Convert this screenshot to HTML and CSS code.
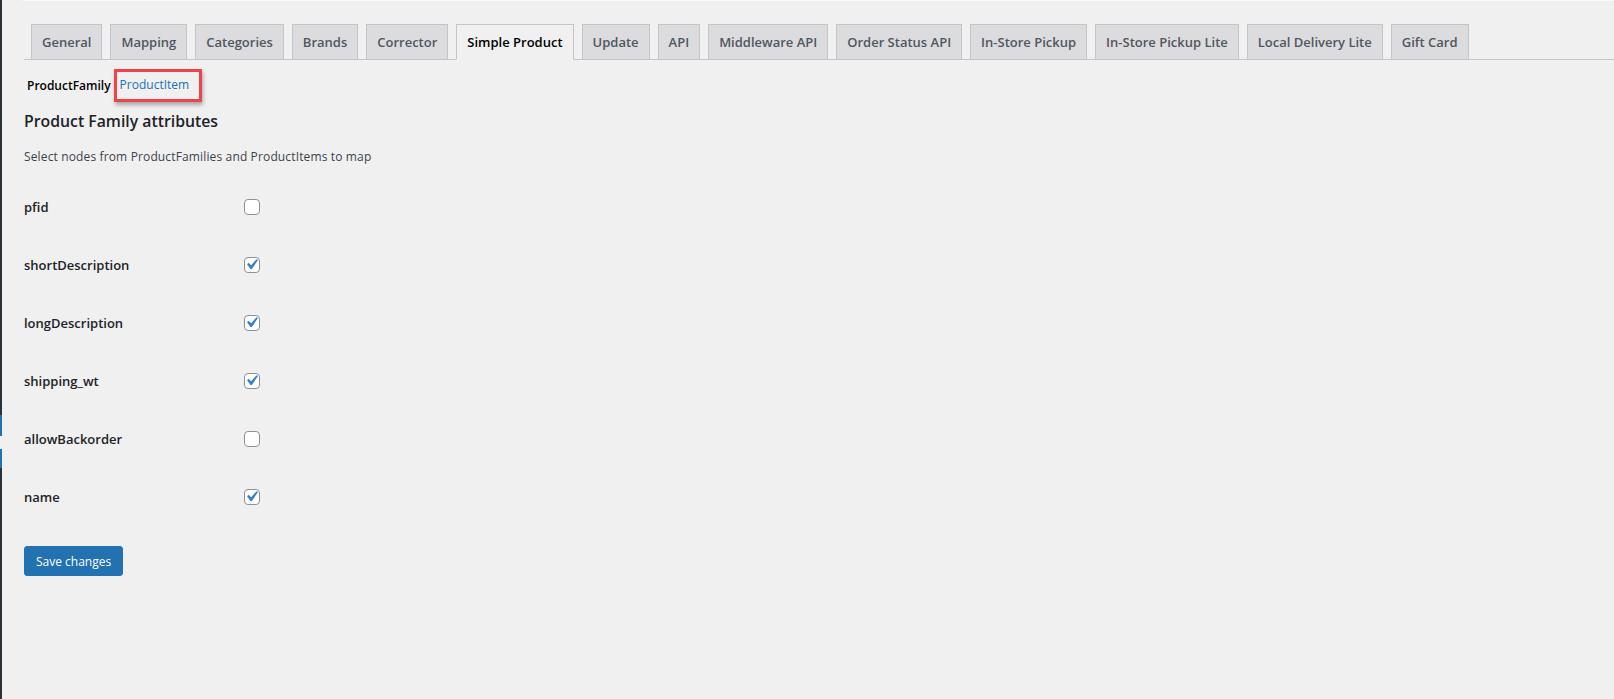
FILE: index.html
```html
<!DOCTYPE html>
<html lang="en">
<head>
    <meta charset="UTF-8">
    <meta name="viewport" content="width=device-width, initial-scale=1.0">
    <title>Settings</title>
    <link rel="stylesheet" href="styles.css">
</head>
<body>
    <div class="admin">
        <div class="menu-edge">
            <span class="edge-dark edge-top"></span>
            <span class="edge-blue edge-blue-a"></span>
            <span class="edge-gap"></span>
            <span class="edge-blue edge-blue-b"></span>
            <span class="edge-dark edge-rest"></span>
        </div>

        <div class="wrap">
            <div class="notice-edge"></div>

            <nav class="nav-tab-wrapper">
                <a class="nav-tab" href="#">General</a>
                <a class="nav-tab" href="#">Mapping</a>
                <a class="nav-tab" href="#">Categories</a>
                <a class="nav-tab" href="#">Brands</a>
                <a class="nav-tab" href="#">Corrector</a>
                <a class="nav-tab nav-tab-active" href="#">Simple Product</a>
                <a class="nav-tab" href="#">Update</a>
                <a class="nav-tab" href="#">API</a>
                <a class="nav-tab" href="#">Middleware API</a>
                <a class="nav-tab" href="#">Order Status API</a>
                <a class="nav-tab" href="#">In-Store Pickup</a>
                <a class="nav-tab" href="#">In-Store Pickup Lite</a>
                <a class="nav-tab" href="#">Local Delivery Lite</a>
                <a class="nav-tab" href="#">Gift Card</a>
            </nav>

            <div class="subsubsub">
                <span class="current">ProductFamily</span>
                <a class="marked" href="#">ProductItem</a>
            </div>

            <h2>Product Family attributes</h2>
            <p class="description">Select nodes from ProductFamilies and ProductItems to map</p>

            <div class="form-table">
                <div class="row">
                    <span class="label">pfid</span>
                    <span class="checkbox"></span>
                </div>
                <div class="row">
                    <span class="label">shortDescription</span>
                    <span class="checkbox checked"><svg viewBox="0 0 20 20"><path d="M14.83 4.89l1.34.94-5.81 8.38H9.02L5.78 9.67l1.34-1.25 2.57 2.4z"/></svg></span>
                </div>
                <div class="row">
                    <span class="label">longDescription</span>
                    <span class="checkbox checked"><svg viewBox="0 0 20 20"><path d="M14.83 4.89l1.34.94-5.81 8.38H9.02L5.78 9.67l1.34-1.25 2.57 2.4z"/></svg></span>
                </div>
                <div class="row">
                    <span class="label">shipping_wt</span>
                    <span class="checkbox checked"><svg viewBox="0 0 20 20"><path d="M14.83 4.89l1.34.94-5.81 8.38H9.02L5.78 9.67l1.34-1.25 2.57 2.4z"/></svg></span>
                </div>
                <div class="row">
                    <span class="label">allowBackorder</span>
                    <span class="checkbox"></span>
                </div>
                <div class="row">
                    <span class="label">name</span>
                    <span class="checkbox checked"><svg viewBox="0 0 20 20"><path d="M14.83 4.89l1.34.94-5.81 8.38H9.02L5.78 9.67l1.34-1.25 2.57 2.4z"/></svg></span>
                </div>
            </div>

            <button class="button-primary">Save changes</button>
        </div>
    </div>
</body>
</html>
```

FILE: styles.css
```css
body {
    margin: 0;
    padding: 0;
    font-family: 'Open Sans', 'Noto Sans', Arial, sans-serif;
    background: #f0f0f1;
    color: #3c434a;
    font-size: 12px;
}

.admin {
    display: flex;
    min-height: 699px;
}

/* the admin menu peeking in on the left */
.menu-edge {
    width: 2px;
    display: flex;
    flex-direction: column;
    flex-shrink: 0;
}

.edge-dark {
    background: #2c3338;
}

.edge-top {
    height: 415px;
}

.edge-blue {
    background: #2271b1;
}

.edge-blue-a {
    height: 21px;
}

.edge-gap {
    height: 13px;
    background: #f0f0f1;
}

.edge-blue-b {
    height: 19px;
}

.edge-rest {
    flex: 1;
}

.wrap {
    flex: 1;
    padding-left: 22px;
}

.notice-edge {
    height: 1px;
    margin-left: -2px;
    background: #f8f8f8;
}

.nav-tab-wrapper {
    display: flex;
    margin-top: 23px;
    border-bottom: 1px solid #c3c4c7;
}

.nav-tab {
    margin-left: 7px;
    margin-right: 1px;
    margin-bottom: -1px;
    padding: 5px 10px;
    border: 1px solid #c3c4c7;
    background: #dcdcde;
    color: #50575e;
    font-size: 13px;
    font-weight: 600;
    line-height: 24px;
    text-decoration: none;
    white-space: nowrap;
}

.nav-tab-active {
    background: #f0f0f1;
    border-bottom-color: #f0f0f1;
    color: #000;
}

.subsubsub {
    display: flex;
    align-items: center;
    margin-top: 9px;
    font-size: 12px;
}

.subsubsub .current {
    margin-left: 3px;
    font-weight: 600;
    color: #000;
}

/* red highlight round the second link */
.subsubsub .marked {
    margin-left: 3px;
    padding: 2px 10px 4px 3px;
    border: 3px solid #ef4349;
    box-shadow: 1px 3px 4px rgba(0, 0, 0, 0.3);
    color: #2271b1;
    text-decoration: none;
    line-height: 21px;
}

h2 {
    margin: 7px 0 0;
    font-size: 15.8px;
    font-weight: 600;
    color: #1d2327;
    line-height: 24px;
}

.description {
    margin: 14px 0 0;
    line-height: 20px;
    letter-spacing: 0.14px;
}

.form-table {
    margin-top: 11px;
}

.row {
    display: flex;
    align-items: center;
    height: 58px;
}

.label {
    width: 220px;
    font-size: 13px;
    font-weight: 600;
    color: #1d2327;
}

.checkbox {
    position: relative;
    width: 14px;
    height: 14px;
    border: 1px solid #8c8f94;
    border-radius: 4px;
    background: #fff;
}

.checkbox svg {
    position: absolute;
    left: -4px;
    top: -4px;
    width: 21px;
    height: 21px;
    fill: #3582c4;
}

.button-primary {
    margin-top: 20px;
    height: 30px;
    padding: 0 11px;
    border: 1px solid #2271b1;
    border-radius: 3px;
    background: #2271b1;
    color: #fff;
    font-family: inherit;
    font-size: 12px;
    cursor: pointer;
}
```
